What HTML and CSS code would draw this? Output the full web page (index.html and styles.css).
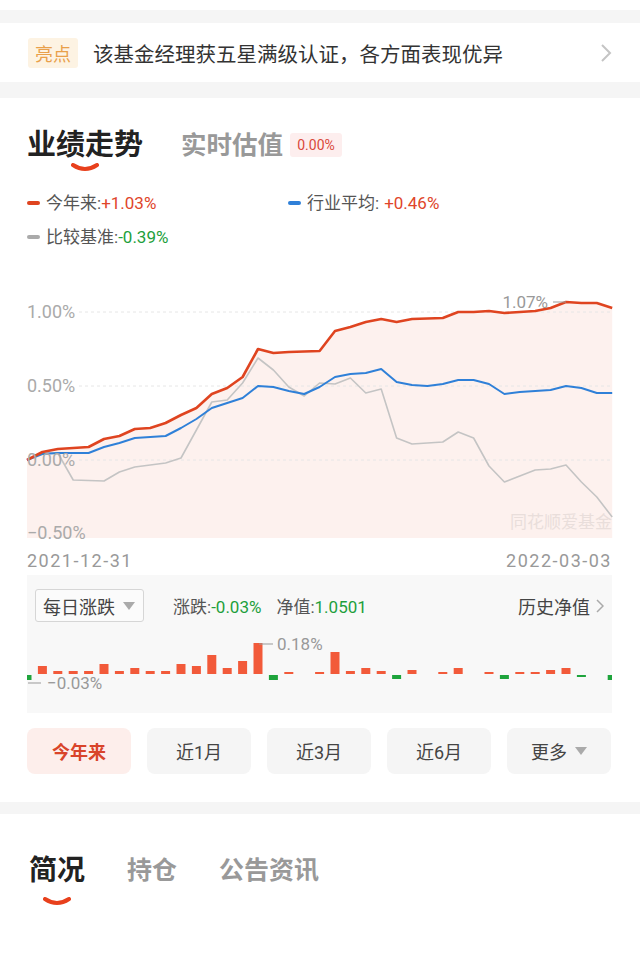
FILE: index.html
```html
<!DOCTYPE html>
<html lang="zh-CN">
<head>
    <meta charset="UTF-8">
    <meta name="viewport" content="width=device-width, initial-scale=1.0">
    <title>业绩走势</title>
    <link rel="stylesheet" href="styles.css">
</head>
<body>
    <div class="top-edge"></div>

    <div class="highlight">
        <span class="highlight-tag">亮点</span>
        <span class="highlight-text">该基金经理获五星满级认证，各方面表现优异</span>
        <svg class="chevron" viewBox="0 0 12 18"><polyline points="2,1 10,9 2,17" fill="none" stroke="#c4c4c4" stroke-width="2"/></svg>
    </div>

    <section class="perf">
        <div class="tabs">
            <div class="tab active">
                <span>业绩走势</span>
                <svg class="smile" viewBox="0 0 28 9"><path d="M2 2 Q14 10 26 2" fill="none" stroke="#e8401c" stroke-width="4" stroke-linecap="round"/></svg>
            </div>
            <div class="tab sub">实时估值</div>
            <span class="est-badge">0.00%</span>
        </div>

        <div class="legend">
            <div class="legend-item"><i class="dash red"></i>今年来:<b class="up">+1.03%</b></div>
            <div class="legend-item"><i class="dash blue"></i>行业平均:<b class="up spaced">+0.46%</b></div>
            <div class="legend-item"><i class="dash gray"></i>比较基准:<b class="down">-0.39%</b></div>
        </div>

        <!-- line chart, x = 15.4 per trading day, 148px per 1% -->
        <svg class="trend" viewBox="0 0 585 268" width="585" height="268">
            <polygon fill="#fdf1ee" points="0,180 15.4,172 30.8,169 46.2,168 61.6,167 77,159 92.4,156 107.8,149 123.2,148 138.6,143 154,135 169.4,128 184.8,114 200.2,108 215.6,97 231,69 246.4,73 261.8,72 277.2,71.5 292.6,71 308,51 323.4,47 338.8,42 354.2,39 369.6,42 385,39 400.4,38.5 415.8,38 431.2,32 446.6,32 462,31 477.4,33 492.8,32 508.2,31 523.6,28 539,22 554.4,23 569.8,23 585.2,28 585.2,258 0,258"/>
            <g stroke="#e6e6e6" stroke-width="1" stroke-dasharray="3 3">
                <line x1="52" y1="32" x2="585" y2="32"/>
                <line x1="52" y1="106" x2="585" y2="106"/>
                <line x1="52" y1="180" x2="585" y2="180"/>
            </g>
            <text class="wm" x="585" y="248" text-anchor="end">同花顺爱基金</text>
            <polyline fill="none" stroke="#c4c4c4" stroke-width="1.6" stroke-linejoin="round" points="0,180 15.4,173 30.8,173 46.2,200 61.6,200.5 77,201 92.4,192 107.8,187 123.2,185 138.6,183 154,178 169.4,150 184.8,122 200.2,120 215.6,103 231,78 246.4,90 261.8,107 277.2,116 292.6,103 308,104 323.4,98 338.8,113 354.2,109 369.6,158 385,164 400.4,163 415.8,162 431.2,152 446.6,158 462,186 477.4,202 492.8,196 508.2,190 523.6,189 539,185 554.4,202 569.8,217 585.2,237"/>
            <polyline fill="none" stroke="#2f80d8" stroke-width="2" stroke-linejoin="round" points="0,180 15.4,174 30.8,173 46.2,173 61.6,173 77,167 92.4,163 107.8,158 123.2,157 138.6,156 154,148 169.4,139 184.8,128 200.2,123 215.6,118 231,106 246.4,107 261.8,111 277.2,114 292.6,107 308,97 323.4,94 338.8,93 354.2,89 369.6,102 385,105 400.4,106 415.8,104 431.2,100 446.6,100 462,104 477.4,114 492.8,112 508.2,111 523.6,110 539,106 554.4,108 569.8,113 585.2,113"/>
            <polyline fill="none" stroke="#df4420" stroke-width="2.6" stroke-linejoin="round" points="0,180 15.4,172 30.8,169 46.2,168 61.6,167 77,159 92.4,156 107.8,149 123.2,148 138.6,143 154,135 169.4,128 184.8,114 200.2,108 215.6,97 231,69 246.4,73 261.8,72 277.2,71.5 292.6,71 308,51 323.4,47 338.8,42 354.2,39 369.6,42 385,39 400.4,38.5 415.8,38 431.2,32 446.6,32 462,31 477.4,33 492.8,32 508.2,31 523.6,28 539,22 554.4,23 569.8,23 585.2,28"/>
            <g class="axis">
                <text x="0" y="38">1.00%</text>
                <text x="0" y="112">0.50%</text>
                <text x="0" y="186">0.00%</text>
                <text x="0" y="259">−0.50%</text>
            </g>
            <line x1="526" y1="22" x2="539" y2="22" stroke="#999" stroke-width="1"/>
            <text class="peak" x="521" y="28" text-anchor="end">1.07%</text>
        </svg>

        <div class="dates">
            <span>2021-12-31</span>
            <span>2022-03-03</span>
        </div>

        <div class="daily">
            <div class="daily-head">
                <div class="select">每日涨跌<i class="tri"></i></div>
                <span class="stat">涨跌:<b class="down">-0.03%</b></span>
                <span class="stat">净值:<b class="down">1.0501</b></span>
                <span class="history">历史净值<svg viewBox="0 0 8 14"><polyline points="1,1 7,7 1,13" fill="none" stroke="#aaa" stroke-width="1.5"/></svg></span>
            </div>
            <svg class="bars" viewBox="0 0 585 91" width="585" height="91">
                <g fill="#f25a3a">
                    <rect x="10.9" y="44" width="9" height="8"/>
                    <rect x="26.3" y="49" width="9" height="3"/>
                    <rect x="41.7" y="49" width="9" height="3"/>
                    <rect x="57.1" y="49" width="9" height="3"/>
                    <rect x="72.5" y="42" width="9" height="10"/>
                    <rect x="87.9" y="49" width="9" height="3"/>
                    <rect x="103.3" y="46" width="9" height="6"/>
                    <rect x="118.7" y="49" width="9" height="3"/>
                    <rect x="134.1" y="49" width="9" height="3"/>
                    <rect x="149.5" y="42" width="9" height="10"/>
                    <rect x="164.9" y="44" width="9" height="8"/>
                    <rect x="180.3" y="33" width="9" height="19"/>
                    <rect x="195.7" y="46" width="9" height="6"/>
                    <rect x="211.1" y="39" width="9" height="13"/>
                    <rect x="226.5" y="21" width="9" height="31"/>
                    <rect x="257.3" y="50" width="9" height="2"/>
                    <rect x="288.1" y="50" width="9" height="2"/>
                    <rect x="303.5" y="30" width="9" height="22"/>
                    <rect x="318.9" y="49" width="9" height="3"/>
                    <rect x="334.3" y="46" width="9" height="6"/>
                    <rect x="349.7" y="49" width="9" height="3"/>
                    <rect x="380.5" y="48" width="9" height="4"/>
                    <rect x="411.3" y="50" width="9" height="2"/>
                    <rect x="426.7" y="46" width="9" height="6"/>
                    <rect x="457.5" y="50" width="9" height="2"/>
                    <rect x="488.3" y="50" width="9" height="2"/>
                    <rect x="503.7" y="50" width="9" height="2"/>
                    <rect x="519.1" y="48" width="9" height="4"/>
                    <rect x="534.5" y="46" width="9" height="6"/>
                </g>
                <g fill="#1ea43c">
                    <rect x="-4.5" y="53" width="9" height="5"/>
                    <rect x="241.9" y="53" width="9" height="5"/>
                    <rect x="365.1" y="53" width="9" height="4"/>
                    <rect x="472.9" y="53" width="9" height="4"/>
                    <rect x="549.9" y="53" width="9" height="2"/>
                    <rect x="580.7" y="53" width="9" height="5"/>
                </g>
                <g stroke="#999" stroke-width="1">
                    <line x1="232" y1="22" x2="246" y2="22"/>
                    <line x1="1" y1="61" x2="14" y2="61"/>
                </g>
                <text class="bar-label" x="250" y="28">0.18%</text>
                <text class="bar-label" x="20" y="67">−0.03%</text>
            </svg>
        </div>

        <div class="ranges">
            <button class="range on">今年来</button>
            <button class="range">近1月</button>
            <button class="range">近3月</button>
            <button class="range">近6月</button>
            <button class="range">更多<i class="tri"></i></button>
        </div>
    </section>

    <section class="detail">
        <div class="tabs bottom">
            <div class="tab active">
                <span>简况</span>
                <svg class="smile" viewBox="0 0 28 9"><path d="M2 2 Q14 10 26 2" fill="none" stroke="#e8401c" stroke-width="4" stroke-linecap="round"/></svg>
            </div>
            <div class="tab sub">持仓</div>
            <div class="tab sub">公告资讯</div>
        </div>
    </section>
</body>
</html>
```

FILE: styles.css
```css
* {
    box-sizing: border-box;
}
body {
    margin: 0;
    background: #f5f5f5;
    font-family: Roboto, "Noto Sans CJK SC", sans-serif;
    color: #333;
}
.top-edge {
    height: 10px;
    background: #fff;
    margin-bottom: 13px;
}

/* highlight banner */
.highlight {
    height: 59px;
    background: #fff;
    display: flex;
    align-items: center;
    padding: 0 28px;
    margin-bottom: 16px;
}
.highlight-tag {
    width: 50px;
    height: 30px;
    border-radius: 3px;
    background: #fdf3e3;
    color: #e9a04a;
    font-size: 18px;
    display: flex;
    align-items: center;
    justify-content: center;
}
.highlight-text {
    flex: 1;
    margin-left: 15px;
    font-size: 20.5px;
    color: #333;
}
.chevron {
    width: 12px;
    height: 18px;
}

/* performance block */
.perf {
    background: #fff;
    padding: 29px 28px 28px 27px;
    margin-bottom: 12px;
}
.tabs {
    display: flex;
    align-items: flex-start;
}
.tab {
    display: flex;
    flex-direction: column;
    align-items: center;
    font-size: 29px;
    line-height: 36px;
    font-weight: 700;
    color: #222;
}
.tab.sub {
    font-size: 25.5px;
    color: #999;
    margin-left: 38px;
}
.smile {
    width: 28px;
    height: 9px;
    display: block;
}
.est-badge {
    margin: 6px 0 0 7px;
    width: 52px;
    height: 24px;
    border-radius: 3px;
    background: #fdeeee;
    color: #d9483b;
    font-size: 14px;
    display: flex;
    align-items: center;
    justify-content: center;
}
.legend {
    display: grid;
    grid-template-columns: 261px 1fr;
    row-gap: 10px;
    margin-top: 19px;
    font-size: 17px;
    line-height: 24px;
    color: #555;
}
.legend-item {
    display: flex;
    align-items: center;
}
.legend b {
    font-weight: 400;
}
.legend b.spaced {
    margin-left: 5px;
}
.dash {
    width: 13px;
    height: 4px;
    border-radius: 2px;
    margin-right: 6px;
}
.dash.red { background: #df4420; }
.dash.blue { background: #2f80d8; }
.dash.gray { background: #aaa; }
.up { color: #e0452a; }
.down { color: #1e9f3c; }

.trend {
    display: block;
    margin-top: 31px;
    overflow: visible;
}
.axis text {
    font-size: 18px;
    fill: #aaa;
}
.wm {
    font-size: 17px;
    fill: #e9dedb;
}
.peak {
    font-size: 17px;
    fill: #999;
}
.dates {
    display: flex;
    justify-content: space-between;
    margin-top: 2px;
    font-size: 18px;
    line-height: 22px;
    letter-spacing: 1.5px;
    color: #999;
}

/* daily change block */
.daily {
    margin-top: 3px;
    height: 138px;
    background: #f8f8f8;
}
.daily-head {
    display: flex;
    align-items: center;
    padding: 14px 8px 0 8px;
    font-size: 17px;
    color: #555;
}
.daily-head b {
    font-weight: 400;
}
.select {
    width: 109px;
    height: 33px;
    border: 1px solid #d6d6d6;
    border-radius: 3px;
    background: #fbfbfb;
    padding-left: 7px;
    display: flex;
    align-items: center;
    font-size: 18px;
    color: #444;
    margin-right: 29px;
}
.tri {
    display: inline-block;
    width: 0;
    height: 0;
    border-left: 6px solid transparent;
    border-right: 6px solid transparent;
    border-top: 8px solid #aaa;
    margin-left: 8px;
}
.stat {
    margin-right: 15px;
}
.history {
    margin-left: auto;
    display: flex;
    align-items: center;
    font-size: 18px;
    color: #444;
}
.history svg {
    width: 8px;
    height: 14px;
    margin-left: 6px;
}
.bars {
    display: block;
}
.bar-label {
    font-size: 17px;
    fill: #999;
}

.ranges {
    display: grid;
    grid-template-columns: repeat(5, 104px);
    column-gap: 16px;
    margin-top: 15px;
}
.range {
    height: 46px;
    border: 0;
    border-radius: 8px;
    background: #f5f5f5;
    font-family: inherit;
    font-size: 18px;
    color: #444;
    display: flex;
    align-items: center;
    justify-content: center;
    padding: 0;
}
.range.on {
    background: #fdeeeb;
    color: #d9442a;
    font-weight: 700;
}

/* bottom tabs */
.detail {
    background: #fff;
    min-height: 146px;
    padding: 39px 28px 0 29px;
}
.tabs.bottom .tab {
    font-size: 28px;
}
.tabs.bottom .tab.sub {
    font-size: 25px;
    margin-left: 42px;
}
.tabs.bottom .smile {
    margin-top: 8px;
}
```
